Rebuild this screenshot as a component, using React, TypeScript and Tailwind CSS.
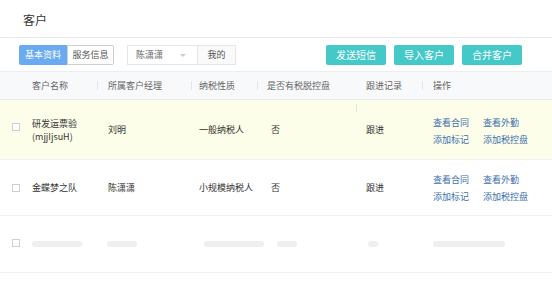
import React from 'react';

const font = { fontFamily: '"Noto Sans CJK SC", "Noto Sans", sans-serif' };

function Checkbox() {
  return <span className="block h-[8px] w-[8px] border border-[#cfcfcf] bg-white" />;
}

function Divider() {
  return <span className="block h-[9px] w-px bg-[#e2e4e8]" />;
}

function Bar({ className }: { className: string }) {
  return <span className={`block h-[6px] rounded-full bg-[#efefef] ${className}`} />;
}

function Actions() {
  return (
    <div className="grid grid-cols-[50px_60px] gap-y-[4px] leading-[13px] text-[#3d6fad]">
      <span>查看合同</span>
      <span>查看外勤</span>
      <span>添加标记</span>
      <span>添加税控盘</span>
    </div>
  );
}

interface Row {
  name: React.ReactNode;
  manager: string;
  nature: string;
  disk: string;
  follow: string;
}

const rows: Row[] = [
  {
    name: (
      <div className="leading-[13px]">
        <div>研发运票验</div>
        <div>(mjjIjsuH)</div>
      </div>
    ),
    manager: '刘明',
    nature: '一般纳税人',
    disk: '否',
    follow: '跟进',
  },
  { name: '金蝶梦之队', manager: '陈潇潇', nature: '小规模纳税人', disk: '否', follow: '跟进' },
];

export default function App() {
  return (
    <div className="h-[303px] w-[552px] overflow-hidden bg-white text-[9px] text-[#333]" style={font}>
      <div className="flex h-[38px] items-center border-b border-[#e8e8e8] pl-[23px] pt-[2px] text-[12px] text-[#333]">
        客户
      </div>

      <div className="flex h-[34px] items-center border-b border-[#eceef2] pl-[19px]">
        <div className="flex h-[20px]">
          <span className="flex w-[48px] items-center justify-center rounded-l-[2px] bg-[#6aaaf0] text-white">基本资料</span>
          <span className="flex w-[47px] items-center justify-center rounded-r-[2px] border border-[#cfcfcf] text-[#555]">服务信息</span>
        </div>
        <div className="ml-[13px] flex h-[20px] border border-[#e6e6e6]">
          <span className="relative flex w-[69px] items-center pl-[8px] text-[#666]">
            陈潇潇
            <span className="absolute left-[52px] top-[8px] h-0 w-0 border-x-[3px] border-t-[3px] border-x-transparent border-t-[#cccccc]" />
          </span>
          <span className="flex w-[38px] items-center justify-center border-l border-[#e6e6e6] bg-[#fafafa] text-[#555]">我的</span>
        </div>
        <div className="ml-auto mr-[30px] flex gap-[8px] text-[10px] text-white">
          <span className="flex h-[20px] w-[60px] items-center justify-center rounded-[2px] bg-[#44c8c8]">发送短信</span>
          <span className="flex h-[20px] w-[60px] items-center justify-center rounded-[2px] bg-[#44c8c8]">导入客户</span>
          <span className="flex h-[20px] w-[60px] items-center justify-center rounded-[2px] bg-[#44c8c8]">合并客户</span>
        </div>
      </div>

      <div className="flex h-[28px] items-center border-b border-[#e9ebef] bg-[#f8f9fb] text-[#666]">
        <span className="w-[32px]" />
        <span className="w-[65px]">客户名称</span>
        <Divider />
        <span className="w-[93px] pl-[10px]">所属客户经理</span>
        <Divider />
        <span className="w-[65px] pl-[7px]">纳税性质</span>
        <Divider />
        <span className="w-[108px] pl-[9px]">是否有税脱控盘</span>
        <span className="w-[56px]">跟进记录</span>
        <Divider />
        <span className="pl-[10px]">操作</span>
      </div>

      {rows.map((r, i) => (
        <div
          key={i}
          className={`flex items-center border-b border-[#f2f2f2] ${i === 0 ? 'h-[60px] bg-[#fcfee9]' : 'h-[56px]'}`}
        >
          <span className={`w-[32px] pl-[12px] ${i === 0 ? '-mt-[6px]' : ''}`}>
            <Checkbox />
          </span>
          <div className="w-[76px]">{r.name}</div>
          <span className="w-[91px]">{r.manager}</span>
          <span className="w-[72px]">{r.nature}</span>
          <span className="relative w-[95px]">
            {r.disk}
            {i === 0 && <span className="absolute left-[85px] top-[-19px] block h-[8px] w-px bg-[#e2e4e8]" />}
          </span>
          <span className="w-[67px]">{r.follow}</span>
          <div className={i === 0 ? 'mt-[2px]' : ''}>
            <Actions />
          </div>
        </div>
      ))}

      <div className="flex h-[57px] items-center border-b border-[#f2f2f2]">
        <span className="w-[32px] pl-[12px] -mt-[2px]">
          <Checkbox />
        </span>
        <Bar className="w-[50px]" />
        <Bar className="ml-[25px] w-[30px]" />
        <Bar className="ml-[67px] w-[60px]" />
        <Bar className="ml-[13px] w-[20px]" />
        <Bar className="ml-[71px] w-[10px]" />
        <Bar className="ml-[55px] w-[72px]" />
      </div>
    </div>
  );
}
